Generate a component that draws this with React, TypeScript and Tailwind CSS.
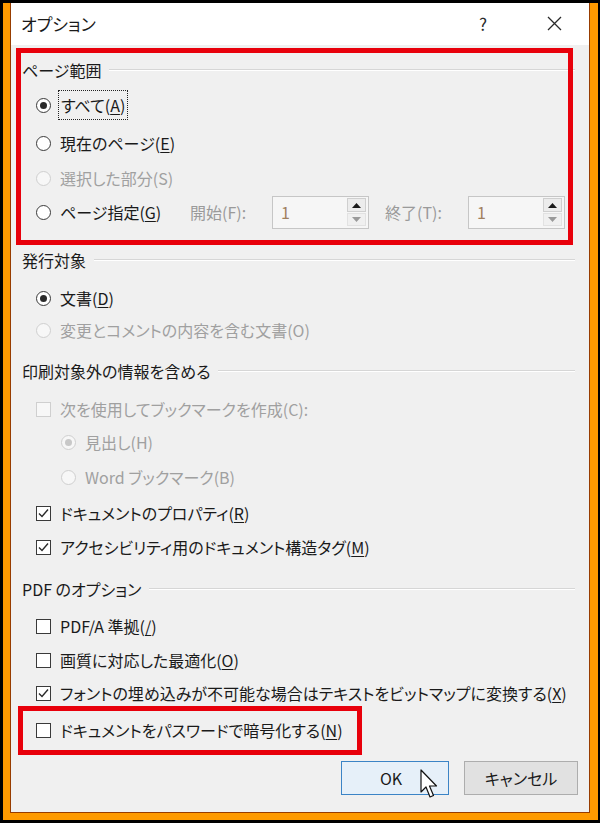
import React from "react";

const FONT = "[font-family:'Noto_Sans_CJK_JP','Noto_Sans',sans-serif] [font-feature-settings:'palt']";

function U({ c }: { c: string }) {
  return <span className="underline underline-offset-[2px] decoration-[1px]">{c}</span>;
}

function Radio({ checked, disabled }: { checked?: boolean; disabled?: boolean }) {
  return (
    <div
      className={
        "w-[15px] h-[15px] rounded-full border flex items-center justify-center shrink-0 " +
        (disabled ? "border-[#cfcfcf] bg-[#f7f7f7]" : "border-[#3a3a3a] bg-white")
      }
    >
      {checked && (
        <div className={"w-[7px] h-[7px] rounded-full " + (disabled ? "bg-[#c8c8c8]" : "bg-[#2a2a2a]")} />
      )}
    </div>
  );
}

function Check({ checked, disabled }: { checked?: boolean; disabled?: boolean }) {
  return (
    <div
      className={
        "w-[15px] h-[15px] border flex items-center justify-center shrink-0 " +
        (disabled ? "border-[#cfcfcf] bg-[#f7f7f7]" : "border-[#3a3a3a] bg-white")
      }
    >
      {checked && (
        <svg width="11" height="11" viewBox="0 0 11 11">
          <path d="M1 5.5 L4 8.5 L10 1.5" fill="none" stroke="#2a2a2a" strokeWidth="1.4" />
        </svg>
      )}
    </div>
  );
}

function Header({ text, mt }: { text: string; mt: string }) {
  return (
    <div className={"h-[32px] flex items-center pl-[11px] pr-[14px] " + mt}>
      <span className="text-[16px] text-[#1a1a1a] whitespace-nowrap">{text}</span>
      <div className="flex-1 ml-[8px] h-[2px] border-t border-[#d6d6d6] border-b-white border-b" />
    </div>
  );
}

function Row({
  mt,
  indent,
  control,
  disabled,
  children,
}: {
  mt: string;
  indent?: boolean;
  control: React.ReactNode;
  disabled?: boolean;
  children: React.ReactNode;
}) {
  return (
    <div className={"h-[32px] flex items-center " + mt + (indent ? " pl-[50px]" : " pl-[25px]")}>
      {control}
      <div
        className={
          "ml-[9px] text-[16px] whitespace-nowrap " + (disabled ? "text-[#a0a0a0]" : "text-[#1a1a1a]")
        }
      >
        {children}
      </div>
    </div>
  );
}

function Spinner() {
  return (
    <div className="w-[97px] h-[33px] border border-[#c6c6c6] bg-[#f6f6f6] flex items-center justify-between pl-[8px] pr-[2px] shrink-0">
      <span className="text-[16px] text-[#a08060]">1</span>
      <div className="flex flex-col gap-px">
        <div className="w-[19px] h-[14px] border border-[#cfcfcf] bg-[#ececec] flex items-center justify-center">
          <svg width="9" height="5" viewBox="0 0 9 5">
            <path d="M0 5 L4.5 0 L9 5 Z" fill="#1a1a1a" />
          </svg>
        </div>
        <div className="w-[19px] h-[13px] border border-[#e2e2e2] bg-[#f0f0f0] flex items-center justify-center">
          <svg width="9" height="5" viewBox="0 0 9 5">
            <path d="M0 0 L4.5 5 L9 0 Z" fill="#9a9a9a" />
          </svg>
        </div>
      </div>
    </div>
  );
}

export default function App() {
  return (
    <div className="w-[600px] h-[823px] bg-black pt-[3px] pl-[3px] pr-[2px] pb-[3px] flex flex-col">
      <div className="flex-1 bg-amber-500 pl-[7px] pr-[8px] pb-[7px] flex flex-col">
        <div
          className={
            "flex-1 min-h-0 flex flex-col border-l border-r border-b border-solid border-amber-800 " + FONT
          }
        >
          {/* title bar */}
          <div className="h-[41px] bg-white flex items-center pl-[10px] pr-[27px] shrink-0">
            <span className="text-[17px] text-[#1a1a1a]">オプション</span>
            <span className="ml-auto text-[17px] text-[#2a2a2a] mr-[60px]">?</span>
            <svg width="15" height="15" viewBox="0 0 15 15">
              <path d="M1 1 L14 14 M14 1 L1 14" stroke="#2a2a2a" strokeWidth="1.3" />
            </svg>
          </div>
          {/* body */}
          <div className="flex-1 bg-[#f0f0f0] flex flex-col border-t border-white">
            <div className="relative mt-[9px]">
              <div className="absolute top-[-6px] bottom-[-17px] left-[5px] right-[16px] border-[5px] border-[#e8000b]" />
              <Header text="ページ範囲" mt="mt-0" />
              <div className="h-[32px] flex items-center pl-[25px] mt-[3px]">
                <Radio checked />
                <div className="ml-[7px] px-[2px] py-[2px] border border-dotted border-[#222] text-[16px] text-[#1a1a1a]">
                  すべて(<U c="A" />)
                </div>
              </div>
              <Row mt="mt-[6px]" control={<Radio />}>
                現在のページ(<U c="E" />)
              </Row>
              <Row mt="mt-[3px]" control={<Radio disabled />} disabled>
                選択した部分(S)
              </Row>
              <div className="h-[32px] flex items-center pl-[25px] mt-[2px]">
                <Radio />
                <div className="ml-[9px] text-[16px] text-[#1a1a1a] whitespace-nowrap w-[112px]">
                  ページ指定(<U c="G" />)
                </div>
                <div className="ml-[18px] text-[16px] text-[#9a9a9a] whitespace-nowrap w-[82px]">開始(F):</div>
                <Spinner />
                <div className="ml-[16px] text-[16px] text-[#9a9a9a] whitespace-nowrap w-[83px]">終了(T):</div>
                <Spinner />
              </div>
            </div>

            <Header text="発行対象" mt="mt-[16px]" />
            <Row mt="mt-[6px]" control={<Radio checked />}>
              文書(<U c="D" />)
            </Row>
            <Row mt="mt-0" control={<Radio disabled />} disabled>
              変更とコメントの内容を含む文書(O)
            </Row>

            <Header text="印刷対象外の情報を含める" mt="mt-[9px]" />
            <Row mt="mt-[6px]" control={<Check disabled />} disabled>
              次を使用してブックマークを作成(C):
            </Row>
            <Row mt="mt-[1px]" indent control={<Radio checked disabled />} disabled>
              見出し(H)
            </Row>
            <Row mt="mt-[3px]" indent control={<Radio disabled />} disabled>
              Word ブックマーク(B)
            </Row>
            <Row mt="mt-[4px]" control={<Check checked />}>
              ドキュメントのプロパティ(<U c="R" />)
            </Row>
            <Row mt="mt-[2px]" control={<Check checked />}>
              アクセシビリティ用のドキュメント構造タグ(<U c="M" />)
            </Row>

            <Header text="PDF のオプション" mt="mt-[10px]" />
            <Row mt="mt-[5px]" control={<Check />}>
              PDF/A 準拠(<U c="/" />)
            </Row>
            <Row mt="mt-[2px]" control={<Check />}>
              画質に対応した最適化(<U c="O" />)
            </Row>
            <Row mt="mt-[1px]" control={<Check checked />}>
              フォントの埋め込みが不可能な場合はテキストをビットマップに変換する(<U c="X" />)
            </Row>
            <div className="relative mt-[5px]">
              <div className="absolute top-[-8px] bottom-[-9px] left-[7px] w-[344px] border-[5px] border-[#e8000b]" />
              <Row mt="mt-0" control={<Check />}>
                ドキュメントをパスワードで暗号化する(<U c="N" />)
              </Row>
            </div>

            <div className="flex justify-end gap-[15px] pr-[11px] mt-[15px]">
              <div className="relative w-[108px] h-[34px] border border-[#3b84c6] bg-[#e6f0f9] flex items-center justify-center">
                <span className="text-[16px] text-[#1a1a1a] mr-[8px]">OK</span>
                <svg className="absolute left-[78px] top-[7px]" width="20" height="31" viewBox="0 0 20 31">
                  <path
                    d="M1 1 L1 23 L6 18 L10 28 L13.5 26.5 L9.5 17 L16.5 17 Z"
                    fill="white"
                    stroke="#111"
                    strokeWidth="1.2"
                    strokeLinejoin="round"
                  />
                </svg>
              </div>
              <div className="w-[114px] h-[34px] border border-[#adadad] bg-[#e1e1e1] flex items-center justify-center">
                <span className="text-[16px] text-[#1a1a1a]">キャンセル</span>
              </div>
            </div>
          </div>
        </div>
      </div>
    </div>
  );
}
